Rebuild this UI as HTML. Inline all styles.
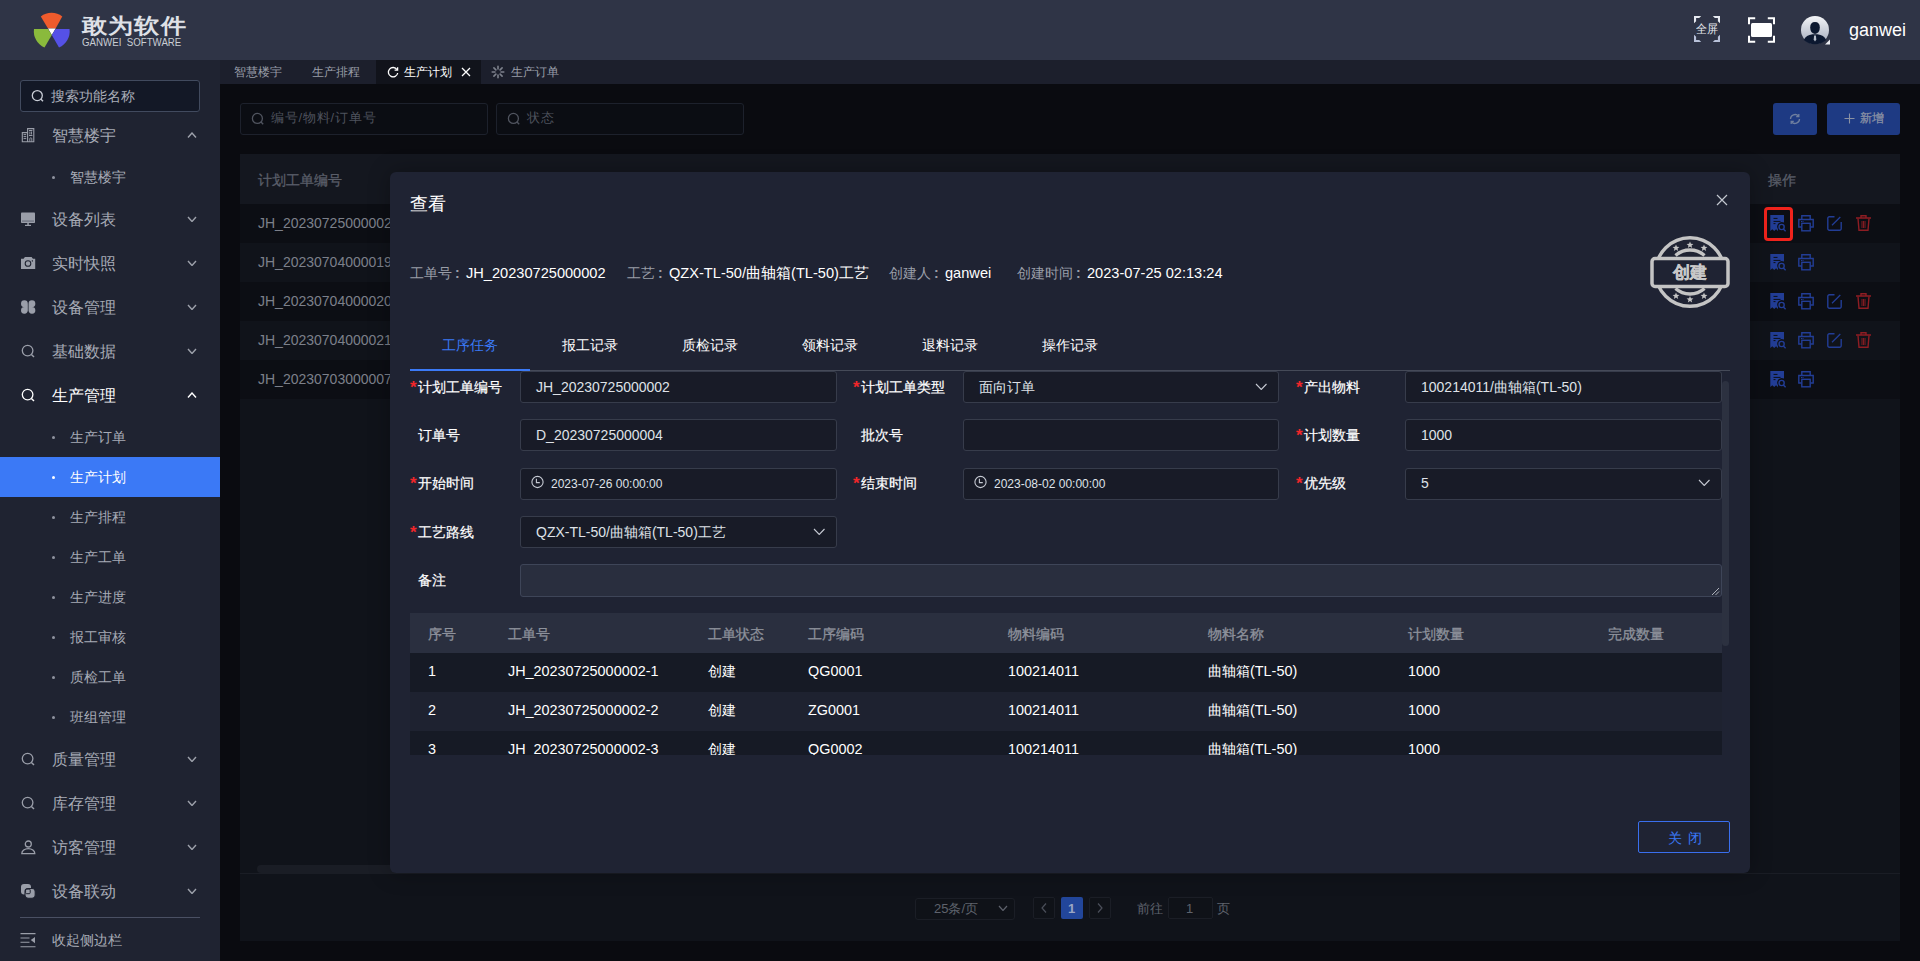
<!DOCTYPE html><html><head><meta charset="utf-8"><style>
*{margin:0;padding:0;box-sizing:border-box}
html,body{width:1920px;height:961px;overflow:hidden;background:#0a0b10;font-family:"Liberation Sans",sans-serif;font-size:13px;color:#fff}
.abs{position:absolute}
.t{position:absolute;white-space:nowrap}
</style></head><body>
<div class="abs" style="left:0;top:0;width:1920px;height:60px;background:#2f3446">
<svg class="abs" style="left:0;top:0" width="80" height="60" viewBox="0 0 80 60"><path d="M40.8 16.5 A17.5 17.5 0 0 1 62.3 16.5 L55.6 28.6 L48 28.6 Z" fill="#ef5b2c"/><path d="M48 28.6 L55.6 28.6 L51.8 35 Z" fill="#ffffff"/><path d="M34 29 L48 29 L51.8 35 L44.5 47.5 A17.5 17.5 0 0 1 34 29 Z" fill="#8aba3c"/><path d="M69.5 29 L55.6 29 L51.8 35 L59 47.5 A17.5 17.5 0 0 0 69.5 29 Z" fill="#5551e6"/></svg>
<div class="t" style="left:82px;top:15px;font-size:26px;line-height:26px;color:#dfe1e7;font-weight:bold;transform:scale(0.96,0.8);transform-origin:0 0;letter-spacing:1.3px">敢为软件</div>
<div class="t" style="left:82px;top:38px;font-size:10px;line-height:10px;color:#c9ccd3;font-weight:normal;letter-spacing:0px;transform:scaleX(0.97);transform-origin:0 0">GANWEI&nbsp; SOFTWARE</div>
<svg class="abs" style="left:1694px;top:16px" width="26" height="26" viewBox="0 0 26 26"><path d="M0 0H7.2L5.2 2.1H2.1V5.2L0 7.2Z M26 0H18.8L20.8 2.1H23.9V5.2L26 7.2Z" fill="#e6e9f0"/><path d="M0 26H7.2L5.2 23.9H2.1V20.8L0 18.8Z M26 26H18.8L20.8 23.9H23.9V20.8L26 18.8Z" fill="#b8c1d9"/></svg>
<div class="t" style="left:1696px;top:23px;font-size:12px;line-height:12px;color:#e6e8ee;font-weight:normal;transform:scaleX(0.92);transform-origin:0 0">全屏</div>
<svg class="abs" style="left:1746px;top:15px" width="30" height="30" viewBox="0 0 30 30"><path d="M3 9.2V3.3H9.2M21.8 3.3H28V9.2M28 20.8V26.7H21.8M9.2 26.7H3V20.8" fill="none" stroke="#ffffff" stroke-width="2"/><rect x="5" y="7.9" width="21" height="14.2" rx="1.5" fill="#ffffff"/></svg>
<svg class="abs" style="left:1800px;top:15px" width="30" height="30" viewBox="0 0 30 30"><defs><linearGradient id="ag" x1="0" y1="0" x2="0" y2="1"><stop offset="0" stop-color="#f4f5f8"/><stop offset="1" stop-color="#a3aabb"/></linearGradient></defs><circle cx="15" cy="15" r="14" fill="url(#ag)"/><path d="M10.2 12.5 Q10.2 7 15 7 Q19.8 7 19.8 12.5 Q19.8 18 15 19 Q10.2 18 10.2 12.5Z" fill="#0c1830"/><path d="M3.8 25 Q6 20 12.5 19.2 L17.5 19.2 Q24 20 26.2 25 Q21.5 29.2 15 29.2 Q8.5 29.2 3.8 25Z" fill="#0c1830"/><path d="M14.1 20.5 L15.9 20.5 L16.3 24.5 L15 26.5 L13.7 24.5Z" fill="#b8bfcc"/><path d="M30 24.5 L30 29.5 L25 29.5Z" fill="#e9ebf0"/></svg>
<div class="t" style="left:1849px;top:21px;font-size:18px;line-height:18px;color:#ffffff;font-weight:normal;">ganwei</div>
</div>
<div class="abs" style="left:0;top:60px;width:220px;height:901px;background:#1f2331">
</div>
<div class="abs" style="left:20px;top:80px;width:180px;height:32px;border:1px solid #414a5e;border-radius:3px;background:#131826"></div>
<svg class="abs" style="left:30px;top:88px" width="16" height="16" viewBox="0 0 16 16"><circle cx="7.3" cy="7.6" r="5" fill="none" stroke="#c9cdd6" stroke-width="1.3"/><path d="M10.8 11l2.2 2.2" stroke="#c9cdd6" stroke-width="1.4"/></svg>
<div class="t" style="left:51px;top:89px;font-size:14px;line-height:14px;color:#a9adb8;font-weight:normal;">搜索功能名称</div>
<div class="abs" style="left:0;top:457px;width:220px;height:40px;background:#3b79f6"></div>
<svg class="abs" style="left:20px;top:127px" width="16" height="16" viewBox="0 0 16 16"><path d="M7.6 1.6h6.2v13.2H7.6z M2.3 5.6h5.3v9.2H2.3z" fill="none" stroke="#9a9ea9" stroke-width="1.1"/><path d="M3.6 7.6h2.6M3.6 9.6h2.6M3.6 11.6h2.6M9 3.5h3.4M9 8.5h3.4" stroke="#9a9ea9" stroke-width="1"/><path d="M9.9 4.5v3M11.5 4.5v3M9.8 14.8v-3a1 1 0 0 1 2 0v3" fill="none" stroke="#9a9ea9" stroke-width="0.9"/></svg>
<div class="t" style="left:52px;top:128px;font-size:16px;line-height:16px;color:#a7abb6;font-weight:normal;">智慧楼宇</div>
<svg class="abs" style="left:187.0px;top:131.75px" width="10" height="6.5" viewBox="-1 -1 10 6.5"><path d="M0 4.5 L4.0 0 L8 4.5" fill="none" stroke="#9da1ab" stroke-width="1.4"/></svg>
<svg class="abs" style="left:20px;top:211px" width="16" height="16" viewBox="0 0 16 16"><rect x="1" y="1.5" width="14" height="10.5" rx="0.8" fill="#9a9ea9"/><rect x="2" y="9.6" width="12" height="0.9" fill="#5a5f6e"/><rect x="7.3" y="12" width="1.5" height="2" fill="#9a9ea9"/><rect x="5" y="13.8" width="6" height="1.2" fill="#9a9ea9"/></svg>
<div class="t" style="left:52px;top:212px;font-size:16px;line-height:16px;color:#a7abb6;font-weight:normal;">设备列表</div>
<svg class="abs" style="left:187.0px;top:215.75px" width="10" height="6.5" viewBox="-1 -1 10 6.5"><path d="M0 0 L4.0 4.5 L8 0" fill="none" stroke="#9da1ab" stroke-width="1.4"/></svg>
<svg class="abs" style="left:20px;top:255px" width="16" height="16" viewBox="0 0 16 16"><path d="M1 3.8h2.6l1.3-1.9h6.7l1.3 1.9H15.2V14H1z" fill="#9a9ea9"/><circle cx="8" cy="8.5" r="2.8" fill="none" stroke="#1f2331" stroke-width="1.1"/><rect x="11.8" y="5.2" width="1.1" height="1.4" fill="#1f2331"/></svg>
<div class="t" style="left:52px;top:256px;font-size:16px;line-height:16px;color:#a7abb6;font-weight:normal;">实时快照</div>
<svg class="abs" style="left:187.0px;top:259.75px" width="10" height="6.5" viewBox="-1 -1 10 6.5"><path d="M0 0 L4.0 4.5 L8 0" fill="none" stroke="#9da1ab" stroke-width="1.4"/></svg>
<svg class="abs" style="left:20px;top:299px" width="16" height="16" viewBox="0 0 16 16"><path d="M7.8 8.1H4.4A3.4 3.4 0 1 1 7.8 4.7z M8.55 8.1h3.4A3.4 3.4 0 1 0 8.55 4.7z M7.8 7.9V11.6A3.4 3.4 0 1 1 4.4 7.9z M8.55 7.9V11.6A3.4 3.4 0 1 0 11.95 7.9z" fill="#9a9ea9"/></svg>
<div class="t" style="left:52px;top:300px;font-size:16px;line-height:16px;color:#a7abb6;font-weight:normal;">设备管理</div>
<svg class="abs" style="left:187.0px;top:303.75px" width="10" height="6.5" viewBox="-1 -1 10 6.5"><path d="M0 0 L4.0 4.5 L8 0" fill="none" stroke="#9da1ab" stroke-width="1.4"/></svg>
<svg class="abs" style="left:20px;top:343px" width="16" height="16" viewBox="0 0 16 16"><circle cx="7.6" cy="7.6" r="5.3" fill="none" stroke="#9a9ea9" stroke-width="1.3"/><path d="M11.4 11.4l2.6 2.6" stroke="#9a9ea9" stroke-width="1.4"/></svg>
<div class="t" style="left:52px;top:344px;font-size:16px;line-height:16px;color:#a7abb6;font-weight:normal;">基础数据</div>
<svg class="abs" style="left:187.0px;top:347.75px" width="10" height="6.5" viewBox="-1 -1 10 6.5"><path d="M0 0 L4.0 4.5 L8 0" fill="none" stroke="#9da1ab" stroke-width="1.4"/></svg>
<svg class="abs" style="left:20px;top:387px" width="16" height="16" viewBox="0 0 16 16"><circle cx="7.6" cy="7.6" r="5.3" fill="none" stroke="#ffffff" stroke-width="1.3"/><path d="M11.4 11.4l2.6 2.6" stroke="#ffffff" stroke-width="1.4"/></svg>
<div class="t" style="left:52px;top:388px;font-size:16px;line-height:16px;color:#ffffff;font-weight:normal;">生产管理</div>
<svg class="abs" style="left:187.0px;top:391.75px" width="10" height="6.5" viewBox="-1 -1 10 6.5"><path d="M0 4.5 L4.0 0 L8 4.5" fill="none" stroke="#ffffff" stroke-width="1.4"/></svg>
<svg class="abs" style="left:20px;top:751px" width="16" height="16" viewBox="0 0 16 16"><circle cx="7.6" cy="7.6" r="5.3" fill="none" stroke="#9a9ea9" stroke-width="1.3"/><path d="M11.4 11.4l2.6 2.6" stroke="#9a9ea9" stroke-width="1.4"/></svg>
<div class="t" style="left:52px;top:752px;font-size:16px;line-height:16px;color:#a7abb6;font-weight:normal;">质量管理</div>
<svg class="abs" style="left:187.0px;top:755.75px" width="10" height="6.5" viewBox="-1 -1 10 6.5"><path d="M0 0 L4.0 4.5 L8 0" fill="none" stroke="#9da1ab" stroke-width="1.4"/></svg>
<svg class="abs" style="left:20px;top:795px" width="16" height="16" viewBox="0 0 16 16"><circle cx="7.6" cy="7.6" r="5.3" fill="none" stroke="#9a9ea9" stroke-width="1.3"/><path d="M11.4 11.4l2.6 2.6" stroke="#9a9ea9" stroke-width="1.4"/></svg>
<div class="t" style="left:52px;top:796px;font-size:16px;line-height:16px;color:#a7abb6;font-weight:normal;">库存管理</div>
<svg class="abs" style="left:187.0px;top:799.75px" width="10" height="6.5" viewBox="-1 -1 10 6.5"><path d="M0 0 L4.0 4.5 L8 0" fill="none" stroke="#9da1ab" stroke-width="1.4"/></svg>
<svg class="abs" style="left:20px;top:839px" width="16" height="16" viewBox="0 0 16 16"><circle cx="8.3" cy="5" r="3" fill="none" stroke="#9a9ea9" stroke-width="1.3"/><path d="M1.8 14.6 A6.5 5 0 0 1 14.8 14.6 Z" fill="none" stroke="#9a9ea9" stroke-width="1.3"/></svg>
<div class="t" style="left:52px;top:840px;font-size:16px;line-height:16px;color:#a7abb6;font-weight:normal;">访客管理</div>
<svg class="abs" style="left:187.0px;top:843.75px" width="10" height="6.5" viewBox="-1 -1 10 6.5"><path d="M0 0 L4.0 4.5 L8 0" fill="none" stroke="#9da1ab" stroke-width="1.4"/></svg>
<svg class="abs" style="left:20px;top:883px" width="16" height="16" viewBox="0 0 16 16"><rect x="1" y="1" width="10" height="10.5" rx="3" fill="#9a9ea9"/><rect x="5" y="5.5" width="10.2" height="9.8" rx="3" fill="#9a9ea9" stroke="#1f2331" stroke-width="1.1"/><rect x="5.6" y="6.1" width="4.6" height="4.6" rx="1" fill="none" stroke="#1f2331" stroke-width="1"/></svg>
<div class="t" style="left:52px;top:884px;font-size:16px;line-height:16px;color:#a7abb6;font-weight:normal;">设备联动</div>
<svg class="abs" style="left:187.0px;top:887.75px" width="10" height="6.5" viewBox="-1 -1 10 6.5"><path d="M0 0 L4.0 4.5 L8 0" fill="none" stroke="#9da1ab" stroke-width="1.4"/></svg>
<div class="abs" style="left:52px;top:176px;width:3px;height:3px;border-radius:50%;background:#9094a0"></div>
<div class="t" style="left:70px;top:170px;font-size:14px;line-height:14px;color:#a7abb6;font-weight:normal;">智慧楼宇</div>
<div class="abs" style="left:52px;top:436px;width:3px;height:3px;border-radius:50%;background:#9094a0"></div>
<div class="t" style="left:70px;top:430px;font-size:14px;line-height:14px;color:#a7abb6;font-weight:normal;">生产订单</div>
<div class="abs" style="left:52px;top:476px;width:3px;height:3px;border-radius:50%;background:#fff"></div>
<div class="t" style="left:70px;top:470px;font-size:14px;line-height:14px;color:#ffffff;font-weight:normal;">生产计划</div>
<div class="abs" style="left:52px;top:516px;width:3px;height:3px;border-radius:50%;background:#9094a0"></div>
<div class="t" style="left:70px;top:510px;font-size:14px;line-height:14px;color:#a7abb6;font-weight:normal;">生产排程</div>
<div class="abs" style="left:52px;top:556px;width:3px;height:3px;border-radius:50%;background:#9094a0"></div>
<div class="t" style="left:70px;top:550px;font-size:14px;line-height:14px;color:#a7abb6;font-weight:normal;">生产工单</div>
<div class="abs" style="left:52px;top:596px;width:3px;height:3px;border-radius:50%;background:#9094a0"></div>
<div class="t" style="left:70px;top:590px;font-size:14px;line-height:14px;color:#a7abb6;font-weight:normal;">生产进度</div>
<div class="abs" style="left:52px;top:636px;width:3px;height:3px;border-radius:50%;background:#9094a0"></div>
<div class="t" style="left:70px;top:630px;font-size:14px;line-height:14px;color:#a7abb6;font-weight:normal;">报工审核</div>
<div class="abs" style="left:52px;top:676px;width:3px;height:3px;border-radius:50%;background:#9094a0"></div>
<div class="t" style="left:70px;top:670px;font-size:14px;line-height:14px;color:#a7abb6;font-weight:normal;">质检工单</div>
<div class="abs" style="left:52px;top:716px;width:3px;height:3px;border-radius:50%;background:#9094a0"></div>
<div class="t" style="left:70px;top:710px;font-size:14px;line-height:14px;color:#a7abb6;font-weight:normal;">班组管理</div>
<div class="abs" style="left:20px;top:917px;width:180px;height:1px;background:#4a5063"></div>
<svg class="abs" style="left:20px;top:932px" width="16" height="16" viewBox="0 0 16 16"><path d="M0.5 1.6h15M0.5 6h9M0.5 10.3h9M0.5 14.7h15" stroke="#9a9ea9" stroke-width="1.1"/><path d="M15 5v6.2l-4.2-3.1z" fill="#9a9ea9"/></svg>
<div class="t" style="left:52px;top:933px;font-size:14px;line-height:14px;color:#a7abb6;font-weight:normal;">收起侧边栏</div>
<div class="abs" style="left:220px;top:60px;width:1700px;height:24px;background:#1c1f2c"></div>
<div class="abs" style="left:376px;top:60px;width:105px;height:24px;background:#11131b"></div>
<div class="t" style="left:234px;top:66px;font-size:12px;line-height:12px;color:#9a9ea9;font-weight:normal;">智慧楼宇</div>
<div class="t" style="left:312px;top:66px;font-size:12px;line-height:12px;color:#9a9ea9;font-weight:normal;">生产排程</div>
<svg class="abs" style="left:386px;top:65px" width="14" height="14" viewBox="0 0 14 14"><path d="M11 4.6A4.7 4.7 0 1 0 11.7 8" fill="none" stroke="#ffffff" stroke-width="1.3"/><path d="M11.6 2.2v3H8.6" fill="none" stroke="#ffffff" stroke-width="1.3"/></svg>
<div class="t" style="left:404px;top:66px;font-size:12px;line-height:12px;color:#ffffff;font-weight:normal;">生产计划</div>
<svg class="abs" style="left:461px;top:67px" width="10" height="10" viewBox="0 0 10 10"><path d="M1 1L9 9M9 1L1 9" stroke="#ffffff" stroke-width="1.3"/></svg>
<svg class="abs" style="left:491px;top:65px" width="14" height="14" viewBox="0 0 14 14"><g stroke="#7d818c" stroke-width="1.6" stroke-linecap="round"><path d="M7 1.2v2.8M7 10v2.8M1.2 7h2.8M10 7h2.8M2.9 2.9l2 2M9.1 9.1l2 2M2.9 11.1l2-2M9.1 4.9l2-2"/></g></svg>
<div class="t" style="left:511px;top:66px;font-size:12px;line-height:12px;color:#9a9ea9;font-weight:normal;">生产订单</div>
<div class="abs" style="left:220px;top:84px;width:1700px;height:877px;background:#0a0b10"></div>
<div class="abs" style="left:240px;top:103px;width:248px;height:32px;border:1px solid #1d212c;border-radius:3px;background:#0b0d13"></div>
<svg class="abs" style="left:250px;top:111px" width="16" height="16" viewBox="0 0 16 16"><circle cx="7.4" cy="7.4" r="5" fill="none" stroke="#50545f" stroke-width="1.3"/><path d="M11 11l2.2 2.2" stroke="#50545f" stroke-width="1.4"/></svg>
<div class="t" style="left:271px;top:111px;font-size:13px;line-height:13px;color:#4e525d;font-weight:normal;letter-spacing:0.8px">编号/物料/订单号</div>
<div class="abs" style="left:496px;top:103px;width:248px;height:32px;border:1px solid #1d212c;border-radius:3px;background:#0b0d13"></div>
<svg class="abs" style="left:506px;top:111px" width="16" height="16" viewBox="0 0 16 16"><circle cx="7.4" cy="7.4" r="5" fill="none" stroke="#50545f" stroke-width="1.3"/><path d="M11 11l2.2 2.2" stroke="#50545f" stroke-width="1.4"/></svg>
<div class="t" style="left:527px;top:111px;font-size:13px;line-height:13px;color:#4e525d;font-weight:normal;letter-spacing:0.8px">状态</div>
<div class="abs" style="left:1773px;top:103px;width:44px;height:32px;border-radius:3px;background:#1e3a83"></div>
<svg class="abs" style="left:1788px;top:111px" width="14" height="16" viewBox="0 0 14 16"><path d="M2.5 8a4.5 4.5 0 0 1 8-2.8M11.5 8a4.5 4.5 0 0 1-8 2.8" fill="none" stroke="#6f7f9f" stroke-width="1.3"/><path d="M10.8 3v2.6H8.2M3.2 13v-2.6h2.6" fill="none" stroke="#6f7f9f" stroke-width="1.3"/></svg>
<div class="abs" style="left:1827px;top:103px;width:73px;height:32px;border-radius:3px;background:#1e3a83"></div>
<svg class="abs" style="left:1844px;top:113px" width="11" height="11" viewBox="0 0 11 11"><path d="M5.5 0.5v10M0.5 5.5h10" stroke="#8a91a3" stroke-width="1.1"/></svg>
<div class="t" style="left:1860px;top:112px;font-size:12px;line-height:12px;color:#8c93a5;font-weight:normal;-webkit-text-stroke:0.25px #8c93a5">新增</div>
<div class="abs" style="left:240px;top:154px;width:1660px;height:787px;background:#10131a"></div>
<div class="abs" style="left:240px;top:154px;width:1660px;height:50px;background:#14171f"></div>
<div class="t" style="left:258px;top:173px;font-size:14px;line-height:14px;color:#5a5e69;font-weight:normal;-webkit-text-stroke:0.3px #5a5e69">计划工单编号</div>
<div class="t" style="left:1768px;top:173px;font-size:14px;line-height:14px;color:#5a5e69;font-weight:normal;-webkit-text-stroke:0.3px #5a5e69">操作</div>
<div class="abs" style="left:240px;top:204px;width:1660px;height:39px;background:#0c0e14"></div>
<div class="t" style="left:258px;top:216px;font-size:14px;line-height:14px;color:#7c808a;font-weight:normal;">JH_20230725000002</div>
<div class="abs" style="left:240px;top:243px;width:1660px;height:39px;background:#10131a"></div>
<div class="t" style="left:258px;top:255px;font-size:14px;line-height:14px;color:#7c808a;font-weight:normal;">JH_20230704000019</div>
<div class="abs" style="left:240px;top:282px;width:1660px;height:39px;background:#0c0e14"></div>
<div class="t" style="left:258px;top:294px;font-size:14px;line-height:14px;color:#7c808a;font-weight:normal;">JH_20230704000020</div>
<div class="abs" style="left:240px;top:321px;width:1660px;height:39px;background:#10131a"></div>
<div class="t" style="left:258px;top:333px;font-size:14px;line-height:14px;color:#7c808a;font-weight:normal;">JH_20230704000021</div>
<div class="abs" style="left:240px;top:360px;width:1660px;height:39px;background:#0c0e14"></div>
<div class="t" style="left:258px;top:372px;font-size:14px;line-height:14px;color:#7c808a;font-weight:normal;">JH_20230703000007</div>
<div class="abs" style="left:240px;top:873px;width:1660px;height:1px;background:#1a1d25"></div>
<div class="abs" style="left:257px;top:865px;width:140px;height:8px;border-radius:4px;background:#1a1d25"></div>
<svg class="abs" style="left:1770px;top:215px" width="17" height="17" viewBox="0 0 17 17"><path d="M0.3 0h13.7v7.6a4.6 4.6 0 0 0-6 6.6V16l-1.9-1.7L4.2 16 2.3 14.3 0.3 16z" fill="#223d95"/><path d="M3.5 3.4h4M3.5 6.4h7M3.5 8.6h2" stroke="#0c0e14" stroke-width="1"/><circle cx="11.6" cy="12" r="2.6" fill="none" stroke="#223d95" stroke-width="1.4"/><path d="M13.4 14l2.2 2.2" stroke="#223d95" stroke-width="1.4"/></svg><svg class="abs" style="left:1798px;top:215px" width="17" height="17" viewBox="0 0 17 17"><path d="M3.8 4.5V0.8h8.4v3.7M3.5 12H0.8V4.5h14.4V12h-2.7" fill="none" stroke="#223d95" stroke-width="1.4"/><rect x="3.8" y="8.3" width="8.4" height="7.5" fill="none" stroke="#223d95" stroke-width="1.4"/><path d="M3 6.5h1M4.5 6.5h1" stroke="#223d95" stroke-width="1"/></svg><svg class="abs" style="left:1827px;top:216px" width="16" height="16" viewBox="0 0 16 16"><path d="M7.5 0.8H2.3A1.5 1.5 0 0 0 0.8 2.3v10.4A1.5 1.5 0 0 0 2.3 14.2h10.4a1.5 1.5 0 0 0 1.5-1.5V6" fill="none" stroke="#223d95" stroke-width="1.4"/><path d="M5 9.2L13.3 1" stroke="#223d95" stroke-width="1.3"/></svg><svg class="abs" style="left:1856px;top:215px" width="16" height="17" viewBox="0 0 16 17"><path d="M0 3h15M5 3V0.8h5V3" fill="none" stroke="#8e1d23" stroke-width="1.4"/><path d="M2 3.5l1 11.8h9l1-11.8" fill="none" stroke="#8e1d23" stroke-width="1.4"/><path d="M6 6v7M7.5 6v7M9 6v7" stroke="#8e1d23" stroke-width="0.9"/></svg>
<svg class="abs" style="left:1770px;top:254px" width="17" height="17" viewBox="0 0 17 17"><path d="M0.3 0h13.7v7.6a4.6 4.6 0 0 0-6 6.6V16l-1.9-1.7L4.2 16 2.3 14.3 0.3 16z" fill="#223d95"/><path d="M3.5 3.4h4M3.5 6.4h7M3.5 8.6h2" stroke="#0c0e14" stroke-width="1"/><circle cx="11.6" cy="12" r="2.6" fill="none" stroke="#223d95" stroke-width="1.4"/><path d="M13.4 14l2.2 2.2" stroke="#223d95" stroke-width="1.4"/></svg><svg class="abs" style="left:1798px;top:254px" width="17" height="17" viewBox="0 0 17 17"><path d="M3.8 4.5V0.8h8.4v3.7M3.5 12H0.8V4.5h14.4V12h-2.7" fill="none" stroke="#223d95" stroke-width="1.4"/><rect x="3.8" y="8.3" width="8.4" height="7.5" fill="none" stroke="#223d95" stroke-width="1.4"/><path d="M3 6.5h1M4.5 6.5h1" stroke="#223d95" stroke-width="1"/></svg>
<svg class="abs" style="left:1770px;top:293px" width="17" height="17" viewBox="0 0 17 17"><path d="M0.3 0h13.7v7.6a4.6 4.6 0 0 0-6 6.6V16l-1.9-1.7L4.2 16 2.3 14.3 0.3 16z" fill="#223d95"/><path d="M3.5 3.4h4M3.5 6.4h7M3.5 8.6h2" stroke="#0c0e14" stroke-width="1"/><circle cx="11.6" cy="12" r="2.6" fill="none" stroke="#223d95" stroke-width="1.4"/><path d="M13.4 14l2.2 2.2" stroke="#223d95" stroke-width="1.4"/></svg><svg class="abs" style="left:1798px;top:293px" width="17" height="17" viewBox="0 0 17 17"><path d="M3.8 4.5V0.8h8.4v3.7M3.5 12H0.8V4.5h14.4V12h-2.7" fill="none" stroke="#223d95" stroke-width="1.4"/><rect x="3.8" y="8.3" width="8.4" height="7.5" fill="none" stroke="#223d95" stroke-width="1.4"/><path d="M3 6.5h1M4.5 6.5h1" stroke="#223d95" stroke-width="1"/></svg><svg class="abs" style="left:1827px;top:294px" width="16" height="16" viewBox="0 0 16 16"><path d="M7.5 0.8H2.3A1.5 1.5 0 0 0 0.8 2.3v10.4A1.5 1.5 0 0 0 2.3 14.2h10.4a1.5 1.5 0 0 0 1.5-1.5V6" fill="none" stroke="#223d95" stroke-width="1.4"/><path d="M5 9.2L13.3 1" stroke="#223d95" stroke-width="1.3"/></svg><svg class="abs" style="left:1856px;top:293px" width="16" height="17" viewBox="0 0 16 17"><path d="M0 3h15M5 3V0.8h5V3" fill="none" stroke="#8e1d23" stroke-width="1.4"/><path d="M2 3.5l1 11.8h9l1-11.8" fill="none" stroke="#8e1d23" stroke-width="1.4"/><path d="M6 6v7M7.5 6v7M9 6v7" stroke="#8e1d23" stroke-width="0.9"/></svg>
<svg class="abs" style="left:1770px;top:332px" width="17" height="17" viewBox="0 0 17 17"><path d="M0.3 0h13.7v7.6a4.6 4.6 0 0 0-6 6.6V16l-1.9-1.7L4.2 16 2.3 14.3 0.3 16z" fill="#223d95"/><path d="M3.5 3.4h4M3.5 6.4h7M3.5 8.6h2" stroke="#0c0e14" stroke-width="1"/><circle cx="11.6" cy="12" r="2.6" fill="none" stroke="#223d95" stroke-width="1.4"/><path d="M13.4 14l2.2 2.2" stroke="#223d95" stroke-width="1.4"/></svg><svg class="abs" style="left:1798px;top:332px" width="17" height="17" viewBox="0 0 17 17"><path d="M3.8 4.5V0.8h8.4v3.7M3.5 12H0.8V4.5h14.4V12h-2.7" fill="none" stroke="#223d95" stroke-width="1.4"/><rect x="3.8" y="8.3" width="8.4" height="7.5" fill="none" stroke="#223d95" stroke-width="1.4"/><path d="M3 6.5h1M4.5 6.5h1" stroke="#223d95" stroke-width="1"/></svg><svg class="abs" style="left:1827px;top:333px" width="16" height="16" viewBox="0 0 16 16"><path d="M7.5 0.8H2.3A1.5 1.5 0 0 0 0.8 2.3v10.4A1.5 1.5 0 0 0 2.3 14.2h10.4a1.5 1.5 0 0 0 1.5-1.5V6" fill="none" stroke="#223d95" stroke-width="1.4"/><path d="M5 9.2L13.3 1" stroke="#223d95" stroke-width="1.3"/></svg><svg class="abs" style="left:1856px;top:332px" width="16" height="17" viewBox="0 0 16 17"><path d="M0 3h15M5 3V0.8h5V3" fill="none" stroke="#8e1d23" stroke-width="1.4"/><path d="M2 3.5l1 11.8h9l1-11.8" fill="none" stroke="#8e1d23" stroke-width="1.4"/><path d="M6 6v7M7.5 6v7M9 6v7" stroke="#8e1d23" stroke-width="0.9"/></svg>
<svg class="abs" style="left:1770px;top:371px" width="17" height="17" viewBox="0 0 17 17"><path d="M0.3 0h13.7v7.6a4.6 4.6 0 0 0-6 6.6V16l-1.9-1.7L4.2 16 2.3 14.3 0.3 16z" fill="#223d95"/><path d="M3.5 3.4h4M3.5 6.4h7M3.5 8.6h2" stroke="#0c0e14" stroke-width="1"/><circle cx="11.6" cy="12" r="2.6" fill="none" stroke="#223d95" stroke-width="1.4"/><path d="M13.4 14l2.2 2.2" stroke="#223d95" stroke-width="1.4"/></svg><svg class="abs" style="left:1798px;top:371px" width="17" height="17" viewBox="0 0 17 17"><path d="M3.8 4.5V0.8h8.4v3.7M3.5 12H0.8V4.5h14.4V12h-2.7" fill="none" stroke="#223d95" stroke-width="1.4"/><rect x="3.8" y="8.3" width="8.4" height="7.5" fill="none" stroke="#223d95" stroke-width="1.4"/><path d="M3 6.5h1M4.5 6.5h1" stroke="#223d95" stroke-width="1"/></svg>
<div class="abs" style="left:1764px;top:207px;width:29px;height:34px;border:3px solid #f0231c;border-radius:4px"></div>
<div class="abs" style="left:915px;top:898px;width:100px;height:22px;border:1px solid #1b1e26;border-radius:3px;background:#0f1218"></div>
<div class="t" style="left:934px;top:902px;font-size:13px;line-height:13px;color:#5e626c;font-weight:normal;">25条/页</div>
<svg class="abs" style="left:998.0px;top:904.75px" width="10" height="6.5" viewBox="-1 -1 10 6.5"><path d="M0 0 L4.0 4.5 L8 0" fill="none" stroke="#5e626c" stroke-width="1.2"/></svg>
<div class="abs" style="left:1033px;top:897px;width:22px;height:22px;border:1px solid #1b1e26;border-radius:2px;background:#0f1218"></div>
<div class="abs" style="left:1061px;top:897px;width:22px;height:22px;border-radius:2px;background:#22469a"></div>
<div class="t" style="left:1068px;top:902px;font-size:13px;line-height:13px;color:#9aa6c4;font-weight:bold;">1</div>
<div class="abs" style="left:1089px;top:897px;width:22px;height:22px;border:1px solid #1b1e26;border-radius:2px;background:#0f1218"></div>
<svg class="abs" style="left:1040px;top:902px" width="8" height="12" viewBox="0 0 8 12"><path d="M6 1.5L2 6l4 4.5" fill="none" stroke="#4b4f5a" stroke-width="1.2"/></svg>
<svg class="abs" style="left:1096px;top:902px" width="8" height="12" viewBox="0 0 8 12"><path d="M2 1.5L6 6l-4 4.5" fill="none" stroke="#4b4f5a" stroke-width="1.2"/></svg>
<div class="t" style="left:1137px;top:902px;font-size:13px;line-height:13px;color:#5e626c;font-weight:normal;">前往</div>
<div class="abs" style="left:1168px;top:897px;width:45px;height:22px;border:1px solid #1b1e26;border-radius:2px;background:#0f1218"></div>
<div class="t" style="left:1186px;top:902px;font-size:13px;line-height:13px;color:#5e626c;font-weight:normal;">1</div>
<div class="t" style="left:1217px;top:902px;font-size:13px;line-height:13px;color:#5e626c;font-weight:normal;">页</div>
<div class="abs" style="left:390px;top:172px;width:1360px;height:701px;background:#1f2333;border-radius:6px;box-shadow:0 0 22px rgba(0,0,0,0.3)"></div>
<div class="t" style="left:410px;top:195px;font-size:18px;line-height:18px;color:#ffffff;font-weight:normal;">查看</div>
<svg class="abs" style="left:1716px;top:194px" width="12" height="12" viewBox="0 0 12 12"><path d="M1 1L11 11M11 1L1 11" stroke="#c3c7d0" stroke-width="1.2"/></svg>
<div class="t" style="left:410px;top:266px;font-size:14px;line-height:14px"><span style="color:#9a9ea8">工单号</span><span style="display:inline-block;width:14px;padding-left:3px;color:#9a9ea8;font-weight:bold">:</span><span style="color:#ffffff;font-size:14.6px">JH_20230725000002</span></div>
<div class="t" style="left:627px;top:266px;font-size:14px;line-height:14px"><span style="color:#9a9ea8">工艺</span><span style="display:inline-block;width:14px;padding-left:3px;color:#9a9ea8;font-weight:bold">:</span><span style="color:#ffffff;font-size:14.6px">QZX-TL-50/曲轴箱(TL-50)工艺</span></div>
<div class="t" style="left:889px;top:266px;font-size:14px;line-height:14px"><span style="color:#9a9ea8">创建人</span><span style="display:inline-block;width:14px;padding-left:3px;color:#9a9ea8;font-weight:bold">:</span><span style="color:#ffffff;font-size:14.6px">ganwei</span></div>
<div class="t" style="left:1017px;top:266px;font-size:14px;line-height:14px"><span style="color:#9a9ea8">创建时间</span><span style="display:inline-block;width:14px;padding-left:3px;color:#9a9ea8;font-weight:bold">:</span><span style="color:#ffffff;font-size:14.6px">2023-07-25 02:13:24</span></div>
<svg class="abs" style="left:1645px;top:230px" width="90" height="84" viewBox="1645 230 90 84"><circle cx="1690" cy="272" r="34.3" fill="none" stroke="#c4c4c4" stroke-width="3.4"/><path d="M1675.5 255.5 A22 22 0 0 1 1704.5 255.5" fill="none" stroke="#c4c4c4" stroke-width="3.4"/><path d="M1675.5 288.5 A22 22 0 0 0 1704.5 288.5" fill="none" stroke="#c4c4c4" stroke-width="3.4"/><rect x="1652" y="258.5" width="76" height="28" rx="3" fill="#1f2333" stroke="#c4c4c4" stroke-width="3.5"/></svg>
<svg class="abs" style="left:1645px;top:230px" width="90" height="84" viewBox="1645 230 90 84"><polygon points="1676.00,244.40 1676.95,246.69 1679.42,246.89 1677.54,248.50 1678.12,250.91 1676.00,249.62 1673.88,250.91 1674.46,248.50 1672.58,246.89 1675.05,246.69" fill="#c4c4c4"/><polygon points="1690.00,241.40 1690.95,243.69 1693.42,243.89 1691.54,245.50 1692.12,247.91 1690.00,246.62 1687.88,247.91 1688.46,245.50 1686.58,243.89 1689.05,243.69" fill="#c4c4c4"/><polygon points="1704.00,244.40 1704.95,246.69 1707.42,246.89 1705.54,248.50 1706.12,250.91 1704.00,249.62 1701.88,250.91 1702.46,248.50 1700.58,246.89 1703.05,246.69" fill="#c4c4c4"/><polygon points="1676.00,292.40 1676.95,294.69 1679.42,294.89 1677.54,296.50 1678.12,298.91 1676.00,297.62 1673.88,298.91 1674.46,296.50 1672.58,294.89 1675.05,294.69" fill="#c4c4c4"/><polygon points="1690.00,295.90 1690.95,298.19 1693.42,298.39 1691.54,300.00 1692.12,302.41 1690.00,301.12 1687.88,302.41 1688.46,300.00 1686.58,298.39 1689.05,298.19" fill="#c4c4c4"/><polygon points="1704.00,292.40 1704.95,294.69 1707.42,294.89 1705.54,296.50 1706.12,298.91 1704.00,297.62 1701.88,298.91 1702.46,296.50 1700.58,294.89 1703.05,294.69" fill="#c4c4c4"/></svg>
<div class="t" style="left:1673px;top:264px;font-size:17px;line-height:17px;color:#c8c8c8;font-weight:bold;-webkit-text-stroke:0.3px #c8c8c8">创建</div>
<div class="t" style="left:442px;top:338px;font-size:14px;line-height:14px;color:#3b7af7;font-weight:normal;">工序任务</div>
<div class="t" style="left:562px;top:338px;font-size:14px;line-height:14px;color:#ffffff;font-weight:normal;">报工记录</div>
<div class="t" style="left:682px;top:338px;font-size:14px;line-height:14px;color:#ffffff;font-weight:normal;">质检记录</div>
<div class="t" style="left:802px;top:338px;font-size:14px;line-height:14px;color:#ffffff;font-weight:normal;">领料记录</div>
<div class="t" style="left:922px;top:338px;font-size:14px;line-height:14px;color:#ffffff;font-weight:normal;">退料记录</div>
<div class="t" style="left:1042px;top:338px;font-size:14px;line-height:14px;color:#ffffff;font-weight:normal;">操作记录</div>
<div class="abs" style="left:410px;top:370px;width:1320px;height:1px;background:#454a58"></div>
<div class="abs" style="left:410px;top:369px;width:120px;height:2px;background:#3b7af7"></div>
<div class="t" style="left:410px;top:379px;font-size:17px;line-height:17px;color:#f0262a;font-weight:bold">*</div><div class="t" style="left:418px;top:380px;font-size:14px;line-height:14px;color:#ffffff;font-weight:normal;-webkit-text-stroke:0.2px #ffffff">计划工单编号</div>
<div class="abs" style="left:520px;top:371px;width:317px;height:32px;border:1px solid #373c4b;border-radius:3px;background:#181b27"></div><div class="t" style="left:536px;top:380px;font-size:14px;line-height:14px;color:#dfe2e8;font-weight:normal;">JH_20230725000002</div>
<div class="t" style="left:853px;top:379px;font-size:17px;line-height:17px;color:#f0262a;font-weight:bold">*</div><div class="t" style="left:861px;top:380px;font-size:14px;line-height:14px;color:#ffffff;font-weight:normal;-webkit-text-stroke:0.2px #ffffff">计划工单类型</div>
<div class="abs" style="left:963px;top:371px;width:316px;height:32px;border:1px solid #373c4b;border-radius:3px;background:#181b27"></div><div class="t" style="left:979px;top:380px;font-size:14px;line-height:14px;color:#dfe2e8;font-weight:normal;">面向订单</div><svg class="abs" style="left:1255.25px;top:382.75px" width="12.5" height="7.5" viewBox="-1 -1 12.5 7.5"><path d="M0 0 L5.25 5.5 L10.5 0" fill="none" stroke="#c6cad3" stroke-width="1.1"/></svg>
<div class="t" style="left:1296px;top:379px;font-size:17px;line-height:17px;color:#f0262a;font-weight:bold">*</div><div class="t" style="left:1304px;top:380px;font-size:14px;line-height:14px;color:#ffffff;font-weight:normal;-webkit-text-stroke:0.2px #ffffff">产出物料</div>
<div class="abs" style="left:1405px;top:371px;width:317px;height:32px;border:1px solid #373c4b;border-radius:3px;background:#181b27"></div><div class="t" style="left:1421px;top:380px;font-size:14px;line-height:14px;color:#dfe2e8;font-weight:normal;">100214011/曲轴箱(TL-50)</div>
<div class="t" style="left:418px;top:428px;font-size:14px;line-height:14px;color:#ffffff;font-weight:normal;-webkit-text-stroke:0.2px #ffffff">订单号</div>
<div class="abs" style="left:520px;top:419px;width:317px;height:32px;border:1px solid #373c4b;border-radius:3px;background:#181b27"></div><div class="t" style="left:536px;top:428px;font-size:14px;line-height:14px;color:#dfe2e8;font-weight:normal;">D_20230725000004</div>
<div class="t" style="left:861px;top:428px;font-size:14px;line-height:14px;color:#ffffff;font-weight:normal;-webkit-text-stroke:0.2px #ffffff">批次号</div>
<div class="abs" style="left:963px;top:419px;width:316px;height:32px;border:1px solid #373c4b;border-radius:3px;background:#181b27"></div><div class="t" style="left:979px;top:428px;font-size:14px;line-height:14px;color:#dfe2e8;font-weight:normal;"></div>
<div class="t" style="left:1296px;top:427px;font-size:17px;line-height:17px;color:#f0262a;font-weight:bold">*</div><div class="t" style="left:1304px;top:428px;font-size:14px;line-height:14px;color:#ffffff;font-weight:normal;-webkit-text-stroke:0.2px #ffffff">计划数量</div>
<div class="abs" style="left:1405px;top:419px;width:317px;height:32px;border:1px solid #373c4b;border-radius:3px;background:#181b27"></div><div class="t" style="left:1421px;top:428px;font-size:14px;line-height:14px;color:#dfe2e8;font-weight:normal;">1000</div>
<div class="t" style="left:410px;top:475px;font-size:17px;line-height:17px;color:#f0262a;font-weight:bold">*</div><div class="t" style="left:418px;top:476px;font-size:14px;line-height:14px;color:#ffffff;font-weight:normal;-webkit-text-stroke:0.2px #ffffff">开始时间</div>
<div class="abs" style="left:520px;top:468px;width:317px;height:32px;border:1px solid #373c4b;border-radius:3px;background:#181b27"></div><svg class="abs" style="left:530px;top:475px" width="14" height="14" viewBox="0 0 14 14"><circle cx="7.5" cy="7" r="5.6" fill="none" stroke="#c6cad3" stroke-width="1.1"/><path d="M6.4 3.8V7.6h3.4" fill="none" stroke="#c6cad3" stroke-width="1.1"/></svg><div class="t" style="left:551px;top:478px;font-size:12px;line-height:12px;color:#dfe2e8;font-weight:normal;">2023-07-26 00:00:00</div>
<div class="t" style="left:853px;top:475px;font-size:17px;line-height:17px;color:#f0262a;font-weight:bold">*</div><div class="t" style="left:861px;top:476px;font-size:14px;line-height:14px;color:#ffffff;font-weight:normal;-webkit-text-stroke:0.2px #ffffff">结束时间</div>
<div class="abs" style="left:963px;top:468px;width:316px;height:32px;border:1px solid #373c4b;border-radius:3px;background:#181b27"></div><svg class="abs" style="left:973px;top:475px" width="14" height="14" viewBox="0 0 14 14"><circle cx="7.5" cy="7" r="5.6" fill="none" stroke="#c6cad3" stroke-width="1.1"/><path d="M6.4 3.8V7.6h3.4" fill="none" stroke="#c6cad3" stroke-width="1.1"/></svg><div class="t" style="left:994px;top:478px;font-size:12px;line-height:12px;color:#dfe2e8;font-weight:normal;">2023-08-02 00:00:00</div>
<div class="t" style="left:1296px;top:475px;font-size:17px;line-height:17px;color:#f0262a;font-weight:bold">*</div><div class="t" style="left:1304px;top:476px;font-size:14px;line-height:14px;color:#ffffff;font-weight:normal;-webkit-text-stroke:0.2px #ffffff">优先级</div>
<div class="abs" style="left:1405px;top:468px;width:317px;height:32px;border:1px solid #373c4b;border-radius:3px;background:#181b27"></div><div class="t" style="left:1421px;top:476px;font-size:14px;line-height:14px;color:#dfe2e8;font-weight:normal;">5</div><svg class="abs" style="left:1698.25px;top:478.75px" width="12.5" height="7.5" viewBox="-1 -1 12.5 7.5"><path d="M0 0 L5.25 5.5 L10.5 0" fill="none" stroke="#c6cad3" stroke-width="1.1"/></svg>
<div class="t" style="left:410px;top:524px;font-size:17px;line-height:17px;color:#f0262a;font-weight:bold">*</div><div class="t" style="left:418px;top:525px;font-size:14px;line-height:14px;color:#ffffff;font-weight:normal;-webkit-text-stroke:0.2px #ffffff">工艺路线</div>
<div class="abs" style="left:520px;top:516px;width:317px;height:32px;border:1px solid #373c4b;border-radius:3px;background:#181b27"></div><div class="t" style="left:536px;top:525px;font-size:14px;line-height:14px;color:#dfe2e8;font-weight:normal;">QZX-TL-50/曲轴箱(TL-50)工艺</div><svg class="abs" style="left:813.25px;top:527.75px" width="12.5" height="7.5" viewBox="-1 -1 12.5 7.5"><path d="M0 0 L5.25 5.5 L10.5 0" fill="none" stroke="#c6cad3" stroke-width="1.1"/></svg>
<div class="t" style="left:418px;top:573px;font-size:14px;line-height:14px;color:#ffffff;font-weight:normal;-webkit-text-stroke:0.2px #ffffff">备注</div>
<div class="abs" style="left:520px;top:564px;width:1202px;height:33px;border:1px solid #3e4558;border-radius:3px;background:#292e3e"></div>
<svg class="abs" style="left:1710px;top:586px" width="10" height="10" viewBox="0 0 10 10"><path d="M9 2L2 9M9 5.5L5.5 9" stroke="#aeb2bb" stroke-width="1"/></svg>
<div class="abs" style="left:1722px;top:381px;width:7px;height:265px;border-radius:4px;background:#2c3140"></div>
<div class="abs" style="left:410px;top:613px;width:1312px;height:40px;background:#2a2f3f"></div>
<div class="t" style="left:428px;top:627px;font-size:14px;line-height:14px;color:#8e929c;font-weight:normal;-webkit-text-stroke:0.3px #8e929c">序号</div>
<div class="t" style="left:508px;top:627px;font-size:14px;line-height:14px;color:#8e929c;font-weight:normal;-webkit-text-stroke:0.3px #8e929c">工单号</div>
<div class="t" style="left:708px;top:627px;font-size:14px;line-height:14px;color:#8e929c;font-weight:normal;-webkit-text-stroke:0.3px #8e929c">工单状态</div>
<div class="t" style="left:808px;top:627px;font-size:14px;line-height:14px;color:#8e929c;font-weight:normal;-webkit-text-stroke:0.3px #8e929c">工序编码</div>
<div class="t" style="left:1008px;top:627px;font-size:14px;line-height:14px;color:#8e929c;font-weight:normal;-webkit-text-stroke:0.3px #8e929c">物料编码</div>
<div class="t" style="left:1208px;top:627px;font-size:14px;line-height:14px;color:#8e929c;font-weight:normal;-webkit-text-stroke:0.3px #8e929c">物料名称</div>
<div class="t" style="left:1408px;top:627px;font-size:14px;line-height:14px;color:#8e929c;font-weight:normal;-webkit-text-stroke:0.3px #8e929c">计划数量</div>
<div class="t" style="left:1608px;top:627px;font-size:14px;line-height:14px;color:#8e929c;font-weight:normal;-webkit-text-stroke:0.3px #8e929c">完成数量</div>
<div style="position:absolute;left:410px;top:653px;width:1312px;height:102px;overflow:hidden">
<div class="abs" style="left:0;top:0px;width:1312px;height:39px;background:#161a25"></div>
<div class="t" style="left:18px;top:11px;font-size:14.4px;line-height:14.4px;color:#ffffff;font-weight:normal;">1</div>
<div class="t" style="left:98px;top:11px;font-size:14.4px;line-height:14.4px;color:#ffffff;font-weight:normal;">JH_20230725000002-1</div>
<div class="t" style="left:298px;top:11px;font-size:14.4px;line-height:14.4px;color:#ffffff;font-weight:normal;">创建</div>
<div class="t" style="left:398px;top:11px;font-size:14.4px;line-height:14.4px;color:#ffffff;font-weight:normal;">QG0001</div>
<div class="t" style="left:598px;top:11px;font-size:14.4px;line-height:14.4px;color:#ffffff;font-weight:normal;">100214011</div>
<div class="t" style="left:798px;top:11px;font-size:14.4px;line-height:14.4px;color:#ffffff;font-weight:normal;">曲轴箱(TL-50)</div>
<div class="t" style="left:998px;top:11px;font-size:14.4px;line-height:14.4px;color:#ffffff;font-weight:normal;">1000</div>
<div class="abs" style="left:0;top:39px;width:1312px;height:39px;background:#1e2230"></div>
<div class="t" style="left:18px;top:50px;font-size:14.4px;line-height:14.4px;color:#ffffff;font-weight:normal;">2</div>
<div class="t" style="left:98px;top:50px;font-size:14.4px;line-height:14.4px;color:#ffffff;font-weight:normal;">JH_20230725000002-2</div>
<div class="t" style="left:298px;top:50px;font-size:14.4px;line-height:14.4px;color:#ffffff;font-weight:normal;">创建</div>
<div class="t" style="left:398px;top:50px;font-size:14.4px;line-height:14.4px;color:#ffffff;font-weight:normal;">ZG0001</div>
<div class="t" style="left:598px;top:50px;font-size:14.4px;line-height:14.4px;color:#ffffff;font-weight:normal;">100214011</div>
<div class="t" style="left:798px;top:50px;font-size:14.4px;line-height:14.4px;color:#ffffff;font-weight:normal;">曲轴箱(TL-50)</div>
<div class="t" style="left:998px;top:50px;font-size:14.4px;line-height:14.4px;color:#ffffff;font-weight:normal;">1000</div>
<div class="abs" style="left:0;top:78px;width:1312px;height:39px;background:#161a25"></div>
<div class="t" style="left:18px;top:89px;font-size:14.4px;line-height:14.4px;color:#ffffff;font-weight:normal;">3</div>
<div class="t" style="left:98px;top:89px;font-size:14.4px;line-height:14.4px;color:#ffffff;font-weight:normal;">JH_20230725000002-3</div>
<div class="t" style="left:298px;top:89px;font-size:14.4px;line-height:14.4px;color:#ffffff;font-weight:normal;">创建</div>
<div class="t" style="left:398px;top:89px;font-size:14.4px;line-height:14.4px;color:#ffffff;font-weight:normal;">QG0002</div>
<div class="t" style="left:598px;top:89px;font-size:14.4px;line-height:14.4px;color:#ffffff;font-weight:normal;">100214011</div>
<div class="t" style="left:798px;top:89px;font-size:14.4px;line-height:14.4px;color:#ffffff;font-weight:normal;">曲轴箱(TL-50)</div>
<div class="t" style="left:998px;top:89px;font-size:14.4px;line-height:14.4px;color:#ffffff;font-weight:normal;">1000</div>
</div>
<div class="abs" style="left:1638px;top:821px;width:92px;height:32px;border:1px solid #3a6fee;border-radius:2px"></div>
<div class="t" style="left:1668px;top:831px;font-size:14px;line-height:14px;color:#3a78f6;font-weight:normal;letter-spacing:1px">关&nbsp;闭</div>
</body></html>
